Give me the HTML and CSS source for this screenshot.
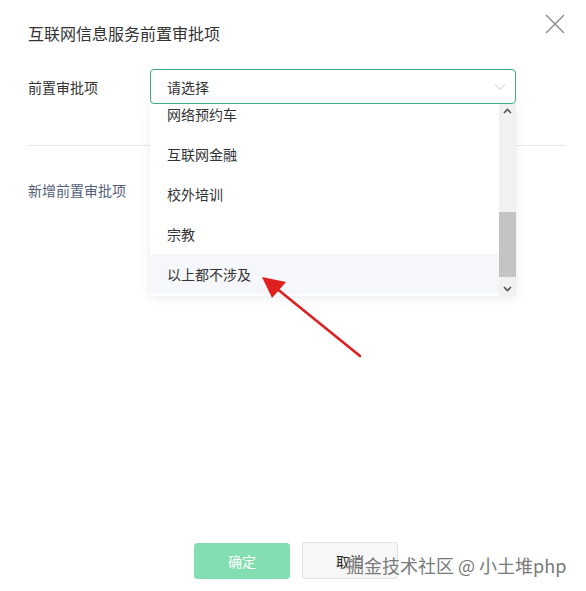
FILE: index.html
```html
<!DOCTYPE html>
<html lang="zh">
<head>
<meta charset="utf-8">
<link rel="stylesheet" href="styles.css">
</head>
<body>
<div class="dialog">
  <div class="header">
    <div class="title">互联网信息服务前置审批项</div>
    <svg class="close" width="22" height="22" viewBox="0 0 22 22"><path d="M2 2 L20 20 M20 2 L2 20" stroke="#8a8a8a" stroke-width="1.4" fill="none"/></svg>
  </div>
  <div class="form-row">
    <div class="label">前置审批项</div>
    <div class="select">
      <span class="placeholder">请选择</span>
      <svg class="chev" width="12" height="8" viewBox="0 0 12 8"><path d="M1 1.5 L6 6.5 L11 1.5" stroke="#c8c8c8" stroke-width="1" fill="none"/></svg>
    </div>
  </div>
  <div class="divider"></div>
  <div class="add-link">新增前置审批项</div>
  <div class="footer">
    <button class="btn btn-primary">确定</button>
    <button class="btn btn-default">取消</button>
  </div>

  <div class="dropdown">
    <div class="options">
      <div class="option">网络预约车</div>
      <div class="option">互联网金融</div>
      <div class="option">校外培训</div>
      <div class="option">宗教</div>
      <div class="option hover">以上都不涉及</div>
    </div>
    <div class="scrollbar">
      <svg class="sb-arrow" width="17" height="14" viewBox="0 0 17 14"><path d="M5 9 L8.5 5.5 L12 9" stroke="#555" stroke-width="1.6" fill="none"/></svg>
      <div class="sb-track"><div class="sb-thumb"></div></div>
      <svg class="sb-arrow" width="17" height="14" viewBox="0 0 17 14"><path d="M5 5 L8.5 8.5 L12 5" stroke="#555" stroke-width="1.6" fill="none"/></svg>
    </div>
  </div>

  <svg class="arrow" width="110" height="90" viewBox="0 0 110 90">
    <path d="M104 82 L20 14" stroke="#e01f1f" stroke-width="2.6" fill="none" stroke-linecap="round"/>
    <path d="M6 3 L30 8 L16 24 Z" fill="#e01f1f"/>
  </svg>

  <div class="watermark">掘金技术社区 @ 小土堆php</div>
</div>
</body>
</html>
```
FILE: styles.css
```css
* { box-sizing: border-box; }
html, body { margin: 0; padding: 0; background: #fff; }
body {
  font-family: "Noto Sans CJK SC", "Noto Sans", sans-serif;
  color: #333;
  width: 586px;
  height: 591px;
  overflow: hidden;
}
.dialog {
  position: relative;
  width: 586px;
  height: 591px;
}
.header {
  display: flex;
  justify-content: space-between;
  align-items: flex-start;
  padding: 13px 20px 0 28px;
}
.title {
  font-size: 16px;
  line-height: 22px;
  margin-top: 9px;
  color: #333;
}
.close { display: block; }
.form-row {
  display: flex;
  align-items: center;
  padding: 0 70px 0 28px;
  margin-top: 25px;
}
.label {
  width: 122px;
  font-size: 14px;
  color: #333;
}
.select {
  flex: 1;
  height: 35px;
  border: 1px solid #3eb07f;
  border-radius: 4px;
  display: flex;
  align-items: center;
  justify-content: space-between;
  padding: 0 9px 0 16px;
}
.placeholder { font-size: 14px; color: #333; }
.chev { display: block; }
.divider {
  height: 1px;
  background: #e8e8e8;
  margin: 41px 21px 0 28px;
}
.add-link {
  font-size: 14px;
  line-height: 20px;
  color: #56627a;
  margin: 34px 0 0 28px;
}
.footer {
  display: flex;
  gap: 12px;
  padding-left: 194px;
  margin-top: 343px;
}
.btn {
  width: 96px;
  height: 36px;
  border-radius: 3px;
  font-family: inherit;
  font-size: 14px;
  padding: 0;
}
.btn-primary {
  background: #83dfb1;
  border: 1px solid #83dfb1;
  color: #fff;
}
.btn-default {
  background: #f7f7f7;
  border: 1px solid #e2e2e2;
  color: #222;
  height: 37px;
  margin-top: -1px;
}
.dropdown {
  position: absolute;
  left: 150px;
  top: 104px;
  width: 366px;
  height: 192px;
  background: #fff;
  display: flex;
  box-shadow: 0 2px 10px rgba(0,0,0,0.08);
  overflow: hidden;
}
.options {
  flex: 1;
  margin-top: -10px;
}
.option {
  height: 40px;
  line-height: 40px;
  padding-left: 17px;
  font-size: 14px;
  color: #333;
}
.option.hover { background: #f5f7fa; }
.scrollbar {
  width: 17px;
  display: flex;
  flex-direction: column;
  background: #f1f1f1;
}
.sb-arrow { display: block; }
.sb-track {
  flex: 1;
  display: flex;
  flex-direction: column;
  justify-content: flex-end;
  padding-bottom: 5px;
}
.sb-thumb {
  height: 65px;
  background: #c4c4c4;
}
.arrow {
  position: absolute;
  left: 256px;
  top: 274px;
}
.watermark {
  position: absolute;
  left: 346px;
  top: 552px;
  font-size: 18px;
  line-height: 26px;
  color: #7a7a7a;
  text-shadow: 0 0 2px #fff;
  white-space: nowrap;
}
```
